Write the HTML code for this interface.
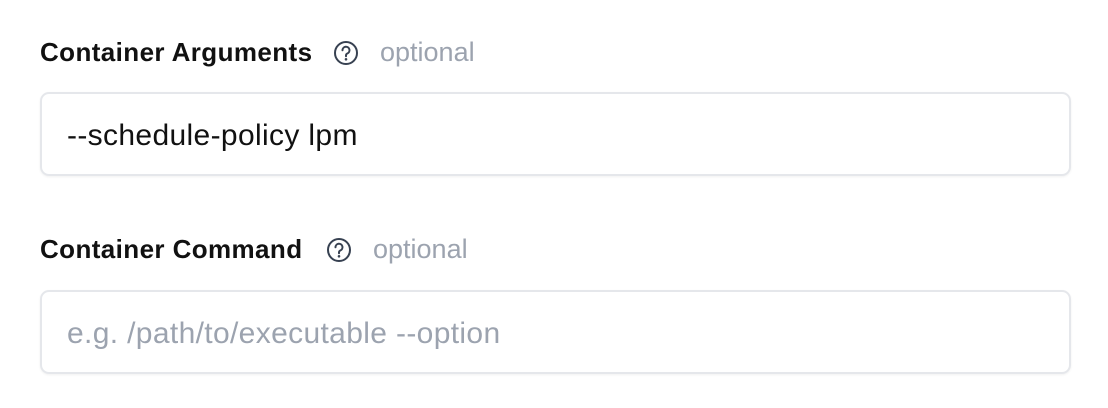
<!DOCTYPE html>
<html><head><style>
body{margin:0;background:#fff;width:1108px;height:408px;overflow:hidden;font-family:"Liberation Sans",sans-serif;}
.lab{position:absolute;left:40px;font-weight:bold;font-size:26px;color:#111;letter-spacing:0.4px;white-space:nowrap;}
.opt{position:absolute;font-size:27px;color:#9ca3af;white-space:nowrap;letter-spacing:0}
.ic{position:absolute;}
.box{position:absolute;left:40px;width:1027px;height:80px;border:2.5px solid #e5e7eb;border-radius:9px;box-shadow:0 1px 2px rgba(0,0,0,0.06);}
.txt{position:absolute;left:67px;font-size:30px;white-space:nowrap;letter-spacing:0.35px}
</style></head><body>
<div class="lab" style="top:37px">Container Arguments</div>
<svg class="ic" style="left:333px;top:40px" width="26" height="26" viewBox="0 0 26 26"><circle cx="13" cy="13" r="11" fill="none" stroke="#374151" stroke-width="2"/><path d="M9.5 10.3a3.5 3.5 0 1 1 4.8 3.2c-.9.4-1.3 1-1.3 2v.8" fill="none" stroke="#374151" stroke-width="2" stroke-linecap="round"/><circle cx="13" cy="19.3" r="1.3" fill="#374151"/></svg>
<div class="opt" style="left:380px;top:37px">optional</div>
<div class="box" style="top:92px"></div>
<div class="txt" style="top:119px;color:#111">--schedule-policy lpm</div>

<div class="lab" style="top:234px">Container Command</div>
<svg class="ic" style="left:326px;top:237px" width="26" height="26" viewBox="0 0 26 26"><circle cx="13" cy="13" r="11" fill="none" stroke="#374151" stroke-width="2"/><path d="M9.5 10.3a3.5 3.5 0 1 1 4.8 3.2c-.9.4-1.3 1-1.3 2v.8" fill="none" stroke="#374151" stroke-width="2" stroke-linecap="round"/><circle cx="13" cy="19.3" r="1.3" fill="#374151"/></svg>
<div class="opt" style="left:373px;top:234px">optional</div>
<div class="box" style="top:290px"></div>
<div class="txt" style="top:317px;color:#9ca3af">e.g. /path/to/executable --option</div>
</body></html>
